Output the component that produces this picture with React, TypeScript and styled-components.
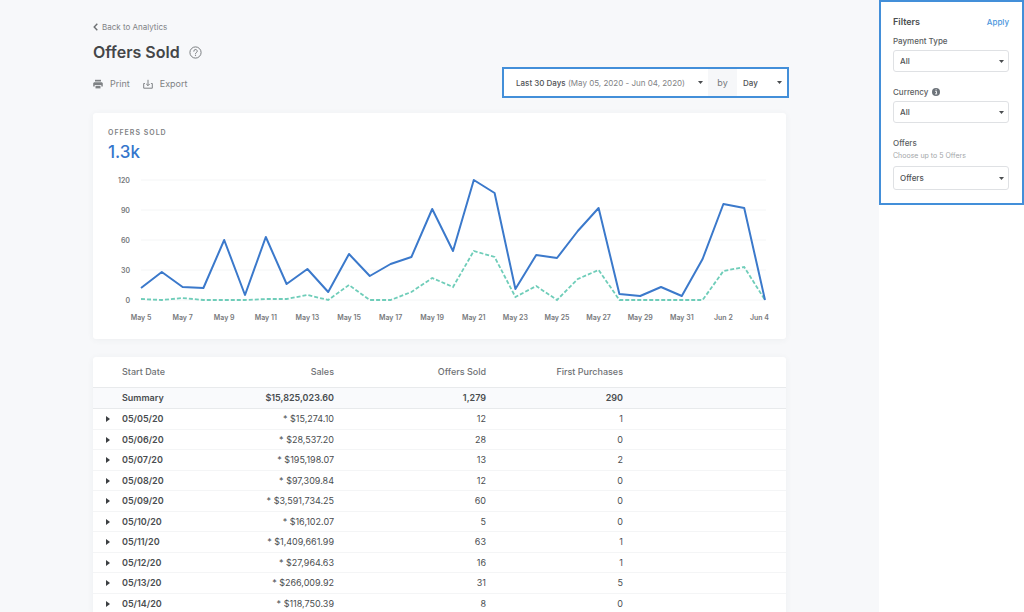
import React from "react";
import styled, { createGlobalStyle } from "styled-components";

const GlobalStyle = createGlobalStyle`
  *, *::before, *::after { box-sizing: border-box; }
  body {
    margin: 0;
    background: #f7f8fa;
    color: #4a4d50;
    font-family: Inter, "Liberation Sans", sans-serif;
    font-size: 9px;
    line-height: 14px;
  }
  button, select { font: inherit; color: inherit; }
`;

const Page = styled.div`
  display: flex;
  min-height: 100vh;
`;

const Main = styled.main`
  flex: 1;
  min-width: 0;
  padding: 20px 93px 0;
  height: 100vh;
  overflow: hidden;
`;

const BackLink = styled.a`
  display: flex;
  align-items: center;
  gap: 4px;
  width: max-content;
  font-size: 8px;
  color: #7f8285;
  text-decoration: none;
`;

const TitleRow = styled.div`
  display: flex;
  align-items: center;
  gap: 9px;
  margin-top: 8px;
`;

const Title = styled.h1`
  margin: 0;
  font-size: 16px;
  line-height: 20px;
  font-weight: 600;
  color: #444648;
`;

const IconButton = styled.button`
  display: flex;
  padding: 0;
  border: 0;
  background: none;
  color: #7b7e81;
`;

const Toolbar = styled.div`
  display: flex;
  align-items: center;
  justify-content: space-between;
  margin-top: 7px;
`;

const Actions = styled.div`
  display: flex;
  gap: 13px;
  padding-top: 2px;
`;

const Action = styled.button`
  display: flex;
  align-items: center;
  gap: 7px;
  padding: 0;
  border: 0;
  background: none;
  color: #7f8285;
`;

const RangePicker = styled.div`
  display: flex;
  height: 27px;
  margin-right: -1px;
  background: #fff;
  outline: 2px solid #438fd9;
`;

const RangeButton = styled.button`
  display: flex;
  align-items: center;
  justify-content: space-between;
  width: 204px;
  padding: 0 5px 0 12px;
  border: 0;
  background: #fff;
  font-size: 8px;
  color: #7f8285;
  white-space: pre;
`;

const Strong = styled.span`
  font-weight: 500;
  color: #4f5255;
`;

const By = styled.span`
  display: flex;
  align-items: center;
  justify-content: center;
  width: 29px;
  background: #f6f7f9;
  color: #77797c;
`;

const SelectBox = styled.span<{ $tall?: boolean; $bare?: boolean }>`
  display: grid;
  align-items: center;
  width: ${(p) => (p.$bare ? "50px" : "100%")};
  height: ${(p) => (p.$bare ? "27px" : p.$tall ? "24px" : "22px")};
  border: ${(p) => (p.$bare ? "0" : "1px solid #dfe1e4")};
  border-radius: ${(p) => (p.$bare ? "0" : "3px")};
  background: #fff;
  color: #4f5255;
  > * { grid-area: 1 / 1; }
  > svg { justify-self: end; margin-right: ${(p) => (p.$bare ? "5px" : "4px")}; pointer-events: none; }
`;

const Select = styled.select`
  appearance: none;
  width: 100%;
  height: 100%;
  padding: 0 12px 0 6px;
  border: 0;
  background: none;
  font-size: 8px;
  font-weight: 500;
`;

const Card = styled.section`
  margin-top: 17px;
  border-radius: 3px;
  background: #fff;
  box-shadow: 0 1px 6px rgba(60, 80, 90, 0.06);
  overflow: hidden;
  & + & { margin-top: 18px; }
`;

const StatLabel = styled.h2`
  margin: 0;
  padding: 13px 15px 0;
  font-size: 7px;
  line-height: 13px;
  font-weight: 600;
  letter-spacing: 1px;
  color: #7f8285;
  text-transform: uppercase;
`;

const StatValue = styled.p`
  margin: 2px 0 0;
  padding: 0 15px;
  font-size: 17px;
  line-height: 22px;
  font-weight: 500;
  color: #3576cc;
`;

const Chart = styled.svg`
  display: block;
  width: 100%;
  font-size: 7px;
  font-weight: 600;
  fill: #77797c;
`;

const Table = styled.table`
  width: 100%;
  table-layout: fixed;
  border-collapse: separate;
  border-spacing: 0;
`;

const Col = styled.col<{ $w?: number }>`
  width: ${(p) => (p.$w ? `${p.$w}px` : "auto")};
`;

const Cell = styled.td`
  padding: 0;
  text-align: right;
`;

const HeadCell = styled(Cell).attrs({ as: "th" })<{ $left?: boolean }>`
  height: 30px;
  text-align: ${(p) => (p.$left ? "left" : "right")};
  font-weight: 500;
  color: #6f7275;
`;

const DateCell = styled(Cell).attrs({ as: "th" })`
  text-align: left;
  font-weight: 600;
`;

const SummaryRow = styled.tr`
  height: 22px;
  background: #f9fafc;
  font-weight: 600;
  > * { border: solid #e8eaec; border-width: 1px 0; }
`;

const DayRow = styled.tr`
  height: 20px;
  &:nth-child(even) { height: 21px; }
  > * { border-bottom: 1px solid #f4f5f6; }
`;

const Toggle = styled.button`
  display: flex;
  padding: 0 0 0 13px;
  border: 0;
  background: none;
`;

const Sidebar = styled.aside`
  flex: none;
  width: 145px;
  background: #fff;
`;

const FilterPanel = styled.form`
  border: 2px solid #438fd9;
  padding: 12px 13px 13px 12px;
`;

const FilterHead = styled.div`
  display: flex;
  justify-content: space-between;
  align-items: center;
  margin-bottom: 4px;
`;

const FilterTitle = styled.h2`
  margin: 0;
  font-size: 9px;
  line-height: 16px;
  font-weight: 600;
  color: #4a4d50;
`;

const Apply = styled.button`
  padding: 0;
  border: 0;
  background: none;
  font-size: 8px;
  line-height: 16px;
  font-weight: 500;
  color: #4b96dd;
`;

const Field = styled.div`
  & + & { margin-top: 13px; }
`;

const FieldLabel = styled.label<{ $hinted?: boolean }>`
  display: flex;
  align-items: center;
  gap: 4px;
  margin-bottom: ${(p) => (p.$hinted ? "0" : "2px")};
  font-size: 8px;
  font-weight: 500;
  color: #5b5e61;
`;

const Hint = styled.p`
  margin: 0 0 4px;
  font-size: 7px;
  line-height: 12px;
  color: #a3a6a9;
`;

const Caret = () => (
  <svg width="5" height="3" viewBox="0 0 5 3" aria-hidden="true">
    <path d="M0 0h5L2.500 3z" fill="#4a4d50" />
  </svg>
);

const HelpIcon = () => (
  <svg width="13" height="13" viewBox="0 0 13 13" fill="none" stroke="currentColor" aria-hidden="true">
    <circle cx="6.500" cy="6.500" r="5.600" />
    <path d="M4.800 5.200a1.700 1.700 0 1 1 2.500 1.500c-.6.300-.8.600-.8 1.200" strokeLinecap="round" />
    <circle cx="6.500" cy="9.500" r=".6" fill="currentColor" stroke="none" />
  </svg>
);

const PrintIcon = () => (
  <svg width="10" height="10" viewBox="0 0 10 10" fill="currentColor" aria-hidden="true">
    <path d="M2 .8h6v1.700H2z" />
    <path d="M1.700 3.200h6.600c.9 0 1.500.6 1.500 1.400v2.800H8.300V6H1.700v1.400H.2V4.600c0-.8.600-1.400 1.500-1.400z" />
    <path d="M2.500 6.800h5v2.600h-5z" />
  </svg>
);

const ExportIcon = () => (
  <svg width="10" height="10" viewBox="0 0 10 10" fill="none" stroke="currentColor" aria-hidden="true">
    <path d="M1.900 4.500H.7v4.700h8.600V4.500H8.100M5 .8v5.700M3.200 4.900L5 6.700l1.800-1.800" />
  </svg>
);

const InfoIcon = () => (
  <svg width="8" height="8" viewBox="0 0 8 8" aria-hidden="true">
    <circle cx="4" cy="4" r="4" fill="#6d737a" />
    <path d="M3.100 3.300h1.400v2.400M3 5.900h2.200M3.600 1.800h1" stroke="#fff" strokeWidth=".9" fill="none" />
  </svg>
);

const offersSold = [12, 28, 13, 12, 60, 5, 63, 16, 31, 8, 46, 24, 36, 43, 91, 49, 120, 107, 11, 45, 42, 69, 92, 6, 4, 13, 4, 41, 96, 92, 0];
const firstPurchases = [1, 0, 2, 0, 0, 0, 1, 1, 5, 0, 15, 0, 0, 8, 22, 13, 49, 43, 3, 14, 0, 21, 30, 0, 0, 0, 0, 0, 29, 33, 0];

const xOf = (i: number) => 48 + i * 20.8;
const yOf = (v: number) => 137 - v;
const toPoints = (values: number[]) => values.map((v, i) => `${xOf(i)},${yOf(v)}`).join(" ");
const dayLabel = (i: number) => (i < 27 ? `May ${i + 5}` : `Jun ${i - 26}`);

const rows = [
  ["05/05/20", "$15,274.10", 12, 1],
  ["05/06/20", "$28,537.20", 28, 0],
  ["05/07/20", "$195,198.07", 13, 2],
  ["05/08/20", "$97,309.84", 12, 0],
  ["05/09/20", "$3,591,734.25", 60, 0],
  ["05/10/20", "$16,102.07", 5, 0],
  ["05/11/20", "$1,409,661.99", 63, 1],
  ["05/12/20", "$27,964.63", 16, 1],
  ["05/13/20", "$266,009.92", 31, 5],
  ["05/14/20", "$118,750.39", 8, 0],
] as const;

export default function App() {
  return (
    <Page>
      <GlobalStyle />
      <Main>
        <BackLink href="#analytics">
          <svg width="5" height="8" viewBox="0 0 5 8" fill="none" stroke="#6d7073" strokeWidth="1.400" aria-hidden="true">
            <path d="M4.300.8L1.200 4l3.100 3.200" />
          </svg>
          Back to Analytics
        </BackLink>
        <TitleRow>
          <Title>Offers Sold</Title>
          <IconButton aria-label="Help"><HelpIcon /></IconButton>
        </TitleRow>
        <Toolbar>
          <Actions>
            <Action><PrintIcon />Print</Action>
            <Action><ExportIcon />Export</Action>
          </Actions>
          <RangePicker>
            <RangeButton aria-haspopup="listbox">
              <span><Strong>Last 30 Days</Strong> (May 05, 2020 - Jun 04, 2020)</span>
              <Caret />
            </RangeButton>
            <By>by</By>
            <SelectBox $bare>
              <Select aria-label="Group by"><option>Day</option></Select>
              <Caret />
            </SelectBox>
          </RangePicker>
        </Toolbar>

        <Card>
          <StatLabel>Offers Sold</StatLabel>
          <StatValue>1.3k</StatValue>
          <Chart viewBox="0 0 693 176" role="img" aria-label="Offers sold per day">
            {[120, 90, 60, 30, 0].map((v) => (
              <g key={v}>
                <line x1="48" x2="673" y1={yOf(v)} y2={yOf(v)} stroke="#f4f5f6" />
                <text x="37" y={yOf(v) + 3} textAnchor="end">{v}</text>
              </g>
            ))}
            {offersSold.map((_, i) =>
              i % 2 === 0 ? (
                <text
                  key={i}
                  x={i === 30 ? 676 : xOf(i)}
                  y="157"
                  textAnchor={i === 30 ? "end" : "middle"}
                >
                  {dayLabel(i)}
                </text>
              ) : null
            )}
            <polyline points={toPoints(firstPurchases)} fill="none" stroke="#6fcdb9" strokeWidth="1.800" strokeDasharray="4 2" />
            <polyline points={toPoints(offersSold)} fill="none" stroke="#3b79cb" strokeWidth="2" strokeLinejoin="round" />
          </Chart>
        </Card>

        <Card>
          <Table>
            <colgroup>
              <Col $w={29} /><Col $w={60} /><Col $w={152} /><Col $w={152} /><Col $w={137} /><Col />
            </colgroup>
            <thead>
              <tr>
                <Cell />
                <HeadCell $left>Start Date</HeadCell>
                <HeadCell>Sales</HeadCell>
                <HeadCell>Offers Sold</HeadCell>
                <HeadCell>First Purchases</HeadCell>
                <Cell />
              </tr>
            </thead>
            <tbody>
              <SummaryRow>
                <Cell />
                <DateCell>Summary</DateCell>
                <Cell>$15,825,023.60</Cell>
                <Cell>1,279</Cell>
                <Cell>290</Cell>
                <Cell />
              </SummaryRow>
              {rows.map(([date, sales, offers, first]) => (
                <DayRow key={date}>
                  <Cell>
                    <Toggle aria-label={`Expand ${date}`}>
                      <svg width="4" height="6" viewBox="0 0 4 6" aria-hidden="true">
                        <path d="M0 0l4 3-4 3z" fill="#3c3f42" />
                      </svg>
                    </Toggle>
                  </Cell>
                  <DateCell>{date}</DateCell>
                  <Cell>* {sales}</Cell>
                  <Cell>{offers}</Cell>
                  <Cell>{first}</Cell>
                  <Cell />
                </DayRow>
              ))}
            </tbody>
          </Table>
        </Card>
      </Main>

      <Sidebar>
        <FilterPanel>
          <FilterHead>
            <FilterTitle>Filters</FilterTitle>
            <Apply type="button">Apply</Apply>
          </FilterHead>
          <Field>
            <FieldLabel htmlFor="payment">Payment Type</FieldLabel>
            <SelectBox><Select id="payment"><option>All</option></Select><Caret /></SelectBox>
          </Field>
          <Field>
            <FieldLabel htmlFor="currency">Currency <InfoIcon /></FieldLabel>
            <SelectBox><Select id="currency"><option>All</option></Select><Caret /></SelectBox>
          </Field>
          <Field>
            <FieldLabel htmlFor="offers" $hinted>Offers</FieldLabel>
            <Hint>Choose up to 5 Offers</Hint>
            <SelectBox $tall><Select id="offers"><option>Offers</option></Select><Caret /></SelectBox>
          </Field>
        </FilterPanel>
      </Sidebar>
    </Page>
  );
}
